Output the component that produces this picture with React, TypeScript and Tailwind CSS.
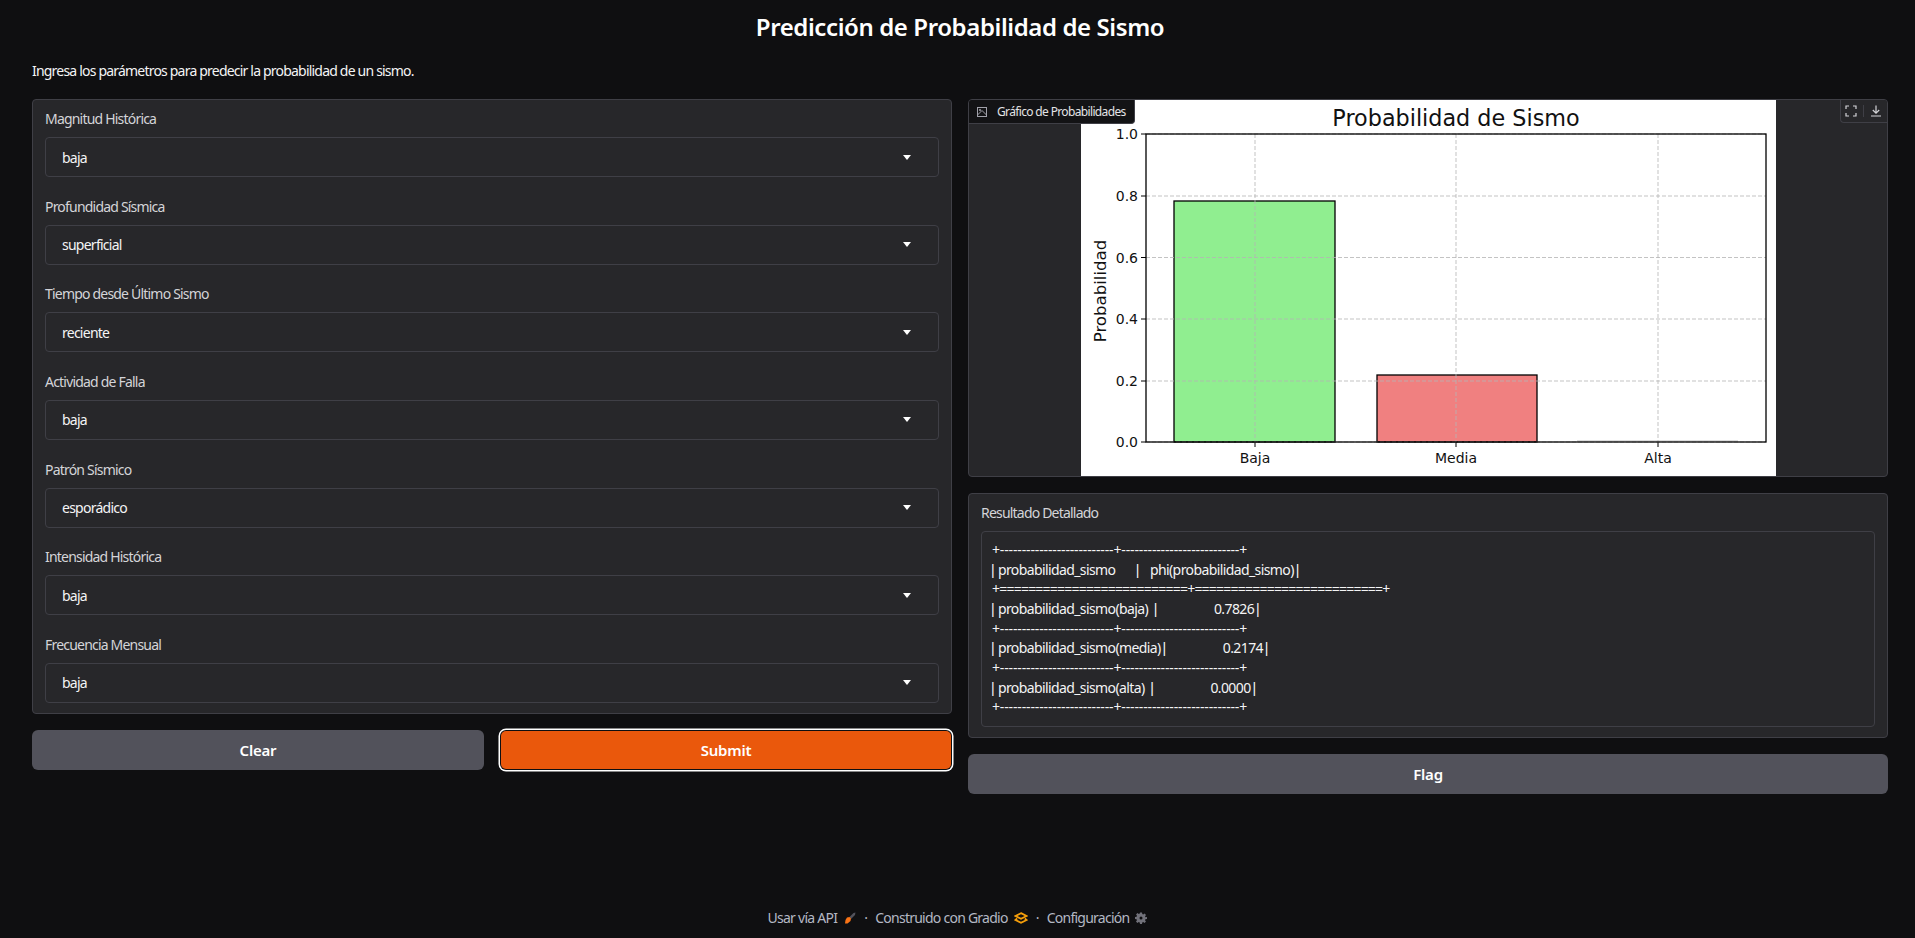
const FIELDS = [
  { label: "Magnitud Histórica", value: "baja" },
  { label: "Profundidad Sísmica", value: "superficial" },
  { label: "Tiempo desde Último Sismo", value: "reciente" },
  { label: "Actividad de Falla", value: "baja" },
  { label: "Patrón Sísmico", value: "esporádico" },
  { label: "Intensidad Histórica", value: "baja" },
  { label: "Frecuencia Mensual", value: "baja" },
];

const DASHES = "+--------------------------+---------------------------+";
const EQUALS = "+==========================+==========================+";

const TABLE = [
  DASHES,
  "| probabilidad_sismo           |     phi(probabilidad_sismo) |",
  EQUALS,
  "| probabilidad_sismo(baja)   |                              0.7826 |",
  DASHES,
  "| probabilidad_sismo(media) |                              0.2174 |",
  DASHES,
  "| probabilidad_sismo(alta)   |                              0.0000 |",
  DASHES,
];

const Y_TICKS = [
  { label: "0.0", y: 342 },
  { label: "0.2", y: 281 },
  { label: "0.4", y: 219 },
  { label: "0.6", y: 157.5 },
  { label: "0.8", y: 96 },
  { label: "1.0", y: 34 },
];

const X_TICKS = [
  { label: "Baja", x: 174 },
  { label: "Media", x: 375 },
  { label: "Alta", x: 577 },
];

function Chart() {
  return (
    <svg width="695" height="376" viewBox="0 0 695 376" className="block bg-white" style={{ fontFamily: "'DejaVu Sans', sans-serif" }}>
      <text x="375" y="26" textAnchor="middle" fontSize="22.3" fill="#111">Probabilidad de Sismo</text>
      <rect x="93" y="101" width="161" height="241" fill="#90ee90" stroke="#000" strokeWidth="1.3" />
      <rect x="296" y="275" width="160" height="67" fill="#f08080" stroke="#000" strokeWidth="1.3" />
      <line x1="496" x2="657" y1="341" y2="341" stroke="#bbb" />
      {X_TICKS.map((t) => (
        <g key={t.label}>
          <line x1={t.x} x2={t.x} y1="34" y2="342" stroke="#b4b4b4" strokeOpacity="0.8" strokeDasharray="4 2" />
          <line x1={t.x} x2={t.x} y1="342" y2="347" stroke="#000" />
          <text x={t.x} y="363" textAnchor="middle" fontSize="14" fill="#111">{t.label}</text>
        </g>
      ))}
      {Y_TICKS.map((t) => (
        <g key={t.label}>
          <line x1="65" x2="685" y1={t.y} y2={t.y} stroke="#b4b4b4" strokeOpacity="0.8" strokeDasharray="4 2" />
          <line x1="60" x2="65" y1={t.y} y2={t.y} stroke="#000" />
          <text x="57" y={t.y + 5} textAnchor="end" fontSize="14" fill="#111">{t.label}</text>
        </g>
      ))}
      <rect x="65" y="34" width="620" height="308" fill="none" stroke="#000" strokeWidth="1.3" />
      <text transform="translate(25 191) rotate(-90)" textAnchor="middle" fontSize="16.6" fill="#111">Probabilidad</text>
    </svg>
  );
}

function Field({ label, value }: { label: string; value: string }) {
  return (
    <div>
      <div className="mb-2 h-5 text-[14px] leading-5 tracking-[-0.8px] text-[#d4d4d8]">{label}</div>
      <div className="flex h-10 items-center justify-between rounded-[4px] border border-[#3f3f46] bg-[#27272a] pl-4 pr-[27px] text-[14px] tracking-[-0.75px] text-[#f4f4f5]">
        <span>{value}</span>
        <span className="h-0 w-0 border-x-[4px] border-t-[5px] border-x-transparent border-t-white" />
      </div>
    </div>
  );
}

// the pipes in the reference are much narrower than Noto's, so they get their own font
function TableRow({ line }: { line: string }) {
  const parts = line.split("|");
  return (
    <div className="-ml-px h-[19.65px] tracking-[-0.6px]">
      {parts.map((part, i) => (
        <span key={i}>
          {i > 0 && <span className="pr-[2px]" style={{ fontFamily: "'Liberation Sans', sans-serif" }}>|</span>}
          {part}
        </span>
      ))}
    </div>
  );
}

function Footer() {
  return (
    <footer className="mt-auto flex items-center justify-center pb-[10px] text-[14px] leading-5 tracking-[-0.75px] text-[#b4b8c4]">
      <span>Usar vía API</span>
      <svg className="ml-[7px]" width="12" height="12" viewBox="0 0 12 12">
        <path d="M5.5 5 9.5 1 11.5 .5 11 3 7 7z" fill="#52525b" />
        <path d="M3 5.5 5.5 5 7 6.5 6.5 9 3.5 11.5H1L1.5 8z" fill="#f97316" />
      </svg>
      <span className="mx-2">·</span>
      <span>Construido con Gradio</span>
      <svg className="ml-[6px]" width="14" height="12" viewBox="0 0 14 12" fill="none" stroke="#f59e0b" strokeWidth="1.9">
        <path d="M7 1.2 12.6 4 7 6.8 1.4 4z" />
        <path d="M3.2 6.6 1.4 8 7 10.8 12.6 8l-1.8-1.4" />
      </svg>
      <span className="mx-2">·</span>
      <span>Configuración</span>
      <svg className="ml-[6px]" width="12" height="12" viewBox="0 0 24 24" fill="#71717a">
        <path d="M10 1h4l.6 3.2 1.9.8 2.7-1.9 2.8 2.8-1.9 2.7.8 1.9L24 10v4l-3.2.6-.8 1.9 1.9 2.7-2.8 2.8-2.7-1.9-1.9.8L14 24h-4l-.6-3.2-1.9-.8-2.7 1.9-2.8-2.8 1.9-2.7-.8-1.9L0 14v-4l3.2-.6.8-1.9-1.9-2.7 2.8-2.8 2.7 1.9 1.9-.8zM12 9a3 3 0 1 0 0 6 3 3 0 0 0 0-6z" />
      </svg>
    </footer>
  );
}

export default function App() {
  return (
    <div className="flex min-h-[938px] flex-col bg-[#0f0f11] text-[#f4f4f5]" style={{ fontFamily: "'Noto Sans', sans-serif" }}>
      <main className="pl-8 pr-[27px]">
        <h1 className="pt-[10px] text-center text-[24px] leading-[34px] font-semibold tracking-[-0.4px] text-white">
          Predicción de Probabilidad de Sismo
        </h1>
        <p className="mt-[17px] text-[14px] leading-5 tracking-[-0.8px]">Ingresa los parámetros para predecir la probabilidad de un sismo.</p>
        <div className="mt-[18px] grid grid-cols-2 gap-4">
          <div>
            <div className="flex h-[615px] flex-col gap-[19.67px] rounded-[4px] border border-[#3f3f46] bg-[#27272a] px-3 pt-[9px]">
              {FIELDS.map((f) => (
                <Field key={f.label} label={f.label} value={f.value} />
              ))}
            </div>
            <div className="mt-4 grid grid-cols-2 gap-4">
              <button className="h-10 rounded-[6px] bg-[#52525b] text-[15px] font-semibold tracking-[-0.2px] text-white">Clear</button>
              <button className="m-px h-[38px] rounded-[5px] bg-[#ea580c] text-[15px] font-semibold tracking-[-0.2px] text-white ring-[1.5px] ring-white ring-offset-1 ring-offset-[#0f0f11]">Submit</button>
            </div>
          </div>
          <div>
            <div className="relative flex h-[378px] justify-center overflow-hidden rounded-[4px] border border-[#3f3f46] bg-[#27272a]">
              <Chart />
              <div className="absolute top-0 left-0 flex h-6 items-center gap-[10px] rounded-br-[4px] border-r border-b border-[#3f3f46] bg-[#131315] pr-2 pl-2 text-[12px] tracking-[-0.65px] text-[#e4e4e7]">
                <svg width="10" height="10" viewBox="0 0 10 10" fill="none" stroke="#a1a1aa" strokeWidth="1">
                  <rect x="0.5" y="0.5" width="9" height="9" />
                  <path d="M0.5 8 5 3.5l4.5 4.5" />
                  <circle cx="3" cy="3" r="0.7" />
                </svg>
                <span>Gráfico de Probabilidades</span>
              </div>
              <div className="absolute top-0 right-0 flex h-[23px] w-[47px] items-center gap-[6px] rounded-bl-[4px] border-b border-l border-[#3f3f46] bg-[#27272a] pl-1">
                <svg width="12" height="12" viewBox="0 0 12 12" fill="none" stroke="#d4d4d8" strokeWidth="1.2">
                  <path d="M1 4V1h3M8 1h3v3M11 8v3H8M4 11H1V8" />
                </svg>
                <span className="h-3 w-px bg-[#3f3f46]" />
                <svg width="12" height="12" viewBox="0 0 12 12" fill="none" stroke="#d4d4d8" strokeWidth="1.2">
                  <path d="M6 0.5V8M2.8 5 6 8.2 9.2 5M1 11h10" />
                </svg>
              </div>
            </div>
            <div className="mt-4 h-[245px] rounded-[4px] border border-[#3f3f46] bg-[#27272a] px-3 pt-[9px]">
              <div className="mb-2 h-5 text-[14px] leading-5 tracking-[-0.8px] text-[#d4d4d8]">Resultado Detallado</div>
              <div className="h-[196px] rounded-[4px] border border-[#3f3f46] px-[10px] pt-2 text-[14px] leading-[19.65px] [word-spacing:-1.2px] whitespace-pre text-[#f4f4f5]">
                {TABLE.map((line, i) =>
                  line === DASHES ? (
                    <div key={i} className="tracking-[-0.14px]">{line}</div>
                  ) : line === EQUALS ? (
                    <div key={i} className="tracking-[-0.78px]">{line}</div>
                  ) : (
                    <TableRow key={i} line={line} />
                  ),
                )}
              </div>
            </div>
            <button className="mt-4 h-10 w-full rounded-[6px] bg-[#52525b] text-[15px] font-semibold tracking-[-0.2px] text-white">Flag</button>
          </div>
        </div>
      </main>
      <Footer />
    </div>
  );
}
